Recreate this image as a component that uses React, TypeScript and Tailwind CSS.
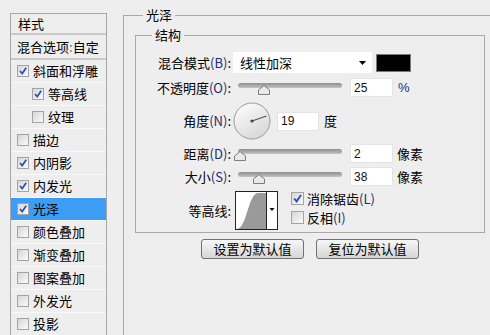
import React from "react";

const cjk = { fontFamily: '"Noto Sans CJK SC", "Microsoft YaHei", sans-serif' };

const items = [
  { label: "斜面和浮雕", checked: true },
  { label: "等高线", checked: true, indent: true },
  { label: "纹理", checked: false, indent: true },
  { label: "描边", checked: false },
  { label: "内阴影", checked: true },
  { label: "内发光", checked: true },
  { label: "光泽", checked: true, active: true },
  { label: "颜色叠加", checked: false },
  { label: "渐变叠加", checked: false },
  { label: "图案叠加", checked: false },
  { label: "外发光", checked: false },
  { label: "投影", checked: false },
];

function Check({ on, size = 12 }: { on: boolean; size?: number }) {
  return (
    <div
      className="shrink-0 border border-[#a3a3a3] bg-linear-to-br from-[#d6d6d6] to-[#fbfbfb] flex items-center justify-center"
      style={{ width: size, height: size }}
    >
      {on && (
        <svg width={size - 2} height={size - 2} viewBox="0 0 10 10">
          <path d="M2 5 L4.2 7.6 L8.2 1.8" fill="none" stroke="#2b4fb8" strokeWidth="1.7" />
        </svg>
      )}
    </div>
  );
}

function Key({ text, k, colon = true }: { text: string; k: string; colon?: boolean }) {
  return (
    <span className="whitespace-nowrap">
      {text}
      <span className="text-[#1f2a70]">({k})</span>
      {colon ? ":" : ""}
    </span>
  );
}

function Slider({ at }: { at: number }) {
  return (
    <div className="relative w-[104px] h-[19px] ml-[7px]">
      <div className="absolute left-0 right-0 top-[5px] h-[5px] rounded-full bg-linear-to-b from-[#8e8e8e] to-[#c4c4c4]" />
      <svg className="absolute top-[7px]" style={{ left: at - 6 }} width="12" height="10" viewBox="0 0 12 10">
        <path d="M6 0.5 L11.5 5 L11.5 9.5 L0.5 9.5 L0.5 5 Z" fill="#e9e9e9" stroke="#7d7d7d" />
      </svg>
    </div>
  );
}

function NumBox({ v, w = 43 }: { v: string; w?: number }) {
  return (
    <div
      className="h-[19px] bg-white border border-[#e4e4e4] pl-[3px] flex items-center text-[12px] text-[#111] ml-[8px]"
      style={{ width: w, fontFamily: '"Liberation Sans", sans-serif' }}
    >
      {v}
    </div>
  );
}

export default function App() {
  return (
    <div className="w-[490px] h-[335px] overflow-hidden bg-[#eeeeee] flex text-[13px] leading-[18px] text-black" style={cjk}>
      <div className="ml-[10px] mt-[13px] w-[97px] self-start flex flex-col border-l border-t border-r border-[#a8a8a8]">
        <div className="h-[21px] pl-[7px] flex items-center border-b-2 border-[#c9c9c9]">样式</div>
        <div className="h-[25px] pl-[6px] flex items-center border-b-2 border-[#c9c9c9] whitespace-nowrap">
          混合选项<span className="text-[#2a7bd8]">:</span>自定
        </div>
        {items.map((it) => (
          <div
            key={it.label}
            className={`h-[23px] flex items-center gap-[4px] border-b border-[#f9f9f9] ${it.indent ? "pl-[21px]" : "pl-[6px]"} ${it.active ? "bg-[#3d9cf4]" : ""}`}
          >
            <Check on={it.checked} size={12} />
            <span className="whitespace-nowrap">{it.label}</span>
          </div>
        ))}
      </div>

      <fieldset className="ml-[16px] mt-[6px] flex-1 h-[360px] border-t border-l border-[#a9a9a9] flex flex-col">
        <legend className="ml-[19px] px-[3px] leading-[18px]">光泽</legend>

        <fieldset className="ml-[11px] mt-[2px] w-[350px] h-[207px] border border-[#a9a9a9] flex flex-col">
          <legend className="ml-[16px] px-[3px] leading-[18px]">结构</legend>

          <div className="mt-[8px] h-[21px] flex items-center">
            <div className="w-[95px] text-right"><Key text="混合模式" k="B" /></div>
            <div className="ml-[2px] w-[139px] h-[21px] bg-white flex items-center pl-[7px] pr-[6px]">
              <span className="flex-1">线性加深</span>
              <svg width="7" height="4" viewBox="0 0 7 4"><path d="M0 0 L7 0 L3.5 4 Z" fill="#000" /></svg>
            </div>
            <div className="ml-[4px] w-[35px] h-[18px] bg-black border border-[#7a7a7a]" />
          </div>

          <div className="mt-[5px] h-[19px] flex items-center">
            <div className="w-[95px] text-right"><Key text="不透明度" k="O" /></div>
            <Slider at={26} />
            <NumBox v="25" />
            <span className="ml-[5px] text-[#1f2a70]" style={{ fontFamily: '"Liberation Sans", sans-serif' }}>%</span>
          </div>

          <div className="mt-[5px] h-[38px] flex items-center">
            <div className="w-[95px] text-right"><Key text="角度" k="N" /></div>
            <svg className="ml-[2px]" width="38" height="38" viewBox="0 0 38 38">
              <defs>
                <linearGradient id="dialg" x1="0" y1="0" x2="0.6" y2="1">
                  <stop offset="0" stopColor="#ffffff" />
                  <stop offset="1" stopColor="#d9d9d9" />
                </linearGradient>
              </defs>
              <circle cx="19" cy="19" r="18" fill="url(#dialg)" stroke="#9b9b9b" />
              <line x1="19" y1="19" x2="33.5" y2="14" stroke="#555" strokeWidth="1.2" />
              <circle cx="19" cy="19" r="1.6" fill="#444" />
            </svg>
            <div className="ml-[-2px]"><NumBox v="19" w={42} /></div>
            <span className="ml-[5px]">度</span>
          </div>

          <div className="mt-[4px] h-[19px] flex items-center">
            <div className="w-[95px] text-right"><Key text="距离" k="D" /></div>
            <Slider at={2} />
            <NumBox v="2" />
            <span className="ml-[4px]">像素</span>
          </div>

          <div className="mt-[4px] h-[19px] flex items-center">
            <div className="w-[95px] text-right"><Key text="大小" k="S" /></div>
            <Slider at={21} />
            <NumBox v="38" />
            <span className="ml-[4px]">像素</span>
          </div>

          <div className="mt-[5px] h-[39px] flex items-start">
            <div className="w-[95px] h-[39px] text-right flex items-center justify-end">等高线:</div>
            <svg className="ml-[4px]" width="43" height="39" viewBox="0 0 43 39">
              <rect x="0.5" y="0.5" width="42" height="38" fill="#fff" stroke="#222" />
              <path d="M2 38 C 12 37, 13 3, 23 2 L 31 2 L 31 38 Z" fill="#9a9a9a" />
              <line x1="31.5" y1="1" x2="31.5" y2="38" stroke="#222" />
              <path d="M34.5 17 L39.5 17 L37 20 Z" fill="#000" />
            </svg>
            <div className="ml-[13px] mt-[-2px] flex flex-col leading-[19px]">
              <div className="h-[19px] flex items-center gap-[3px]">
                <Check on size={13} />
                <Key text="消除锯齿" k="L" colon={false} />
              </div>
              <div className="h-[19px] flex items-center gap-[3px]">
                <Check on={false} size={13} />
                <Key text="反相" k="I" colon={false} />
              </div>
            </div>
          </div>
        </fieldset>

        <div className="mt-[6px] ml-[77px] flex gap-[12px]">
          <button className="w-[103px] h-[20px] rounded-[3px] border border-[#707070] bg-linear-to-b from-[#f7f7f7] to-[#d6d6d6] leading-[18px]">设置为默认值</button>
          <button className="w-[103px] h-[20px] rounded-[3px] border border-[#707070] bg-linear-to-b from-[#f7f7f7] to-[#d6d6d6] leading-[18px]">复位为默认值</button>
        </div>
      </fieldset>
    </div>
  );
}
